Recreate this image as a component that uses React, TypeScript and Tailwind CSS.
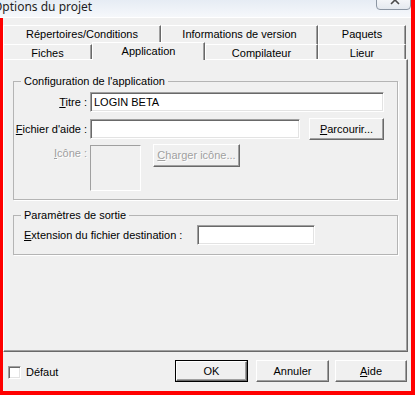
import React from 'react';

const raised =
  'bg-[#f0f0f0] border border-t-white border-l-white border-r-[#696969] border-b-[#696969] shadow-[inset_-1px_-1px_0_#a0a0a0]';
const sunken =
  'border border-t-[#a0a0a0] border-l-[#a0a0a0] border-r-white border-b-white shadow-[inset_1px_1px_0_#696969,inset_-1px_-1px_0_#e3e3e3]';
const disabledText = 'text-[#a0a0a0] [text-shadow:1px_1px_0_#fff]';

const Tab = ({ label, w, selected = false }: { label: string; w: string; selected?: boolean }) => (
  <div
    className={`${w} flex justify-center border-t border-l border-t-white border-l-white border-r border-r-[#696969] shadow-[inset_-1px_0_0_#a0a0a0] bg-[#f0f0f0] ${
      selected ? 'relative z-10 h-[18px] -mb-[1px] pt-[2px]' : 'h-full pt-[2px]'
    }`}
  >
    {label}
  </div>
);

const App = () => {
  return (
    <div className="w-[415px] h-[395px] overflow-hidden bg-[#f0f0f0] border-r-4 border-b-4 border-[#ff0000] font-['Liberation_Sans',Arial,sans-serif] text-[11px] leading-[13px] text-black flex flex-col">
      {/* title bar */}
      <div className="h-[18px] shrink-0 flex justify-between bg-gradient-to-b from-[#e6ecf4] to-[#f6f8fb] border-b border-b-white">
        <span className="-ml-[7px] pt-[1px] text-[12px] leading-[12px] text-[#1e1e1e] font-['Noto_Sans',sans-serif]">
          Options du projet
        </span>
        <div className="w-[35px] h-[11px] -mt-[1px] rounded-b-[4px] border border-[#8c96a3] bg-gradient-to-b from-[#f3f5f8] to-[#e5e9ef]">
          <svg width="33" height="10" viewBox="0 0 33 10">
            <path d="M14 -4 L22 4 M22 -4 L14 4" stroke="#4a4a4a" strokeWidth="1.6" fill="none" />
          </svg>
        </div>
      </div>

      {/* body */}
      <div className="flex-1 flex flex-col border-l-[3px] border-[#ff0000]">
        {/* tabs */}
        <div className="mt-[7px] w-[403px] flex flex-col">
          <div className="h-[19px] flex">
            <Tab label="Répertoires/Conditions" w="w-[158px]" />
            <Tab label="Informations de version" w="w-[157px]" />
            <Tab label="Paquets" w="w-[88px]" />
          </div>
          <div className="h-[15px] flex items-end">
            <Tab label="Fiches" w="w-[89px]" />
            <Tab label="Application" w="w-[113px]" selected />
            <Tab label="Compilateur" w="w-[113px]" />
            <Tab label="Lieur" w="w-[88px]" />
          </div>
        </div>

        {/* tab page */}
        <div className="w-[405px] h-[293px] border-t border-l border-t-white border-l-white border-r border-b border-r-[#696969] border-b-[#696969] shadow-[inset_-1px_-1px_0_#a0a0a0] px-[9px]">
          <fieldset className="mt-[15px] border border-[#b4b4b4] shadow-[1px_1px_0_#fff] pb-[8px]">
            <legend className="ml-[7px] px-[3px]">Configuration de l'application</legend>
            <div className="flex flex-col pt-[4px]">
              <div className="flex items-center">
                <span className="w-[73px] text-right">
                  <u>T</u>itre :
                </span>
                <div className={`ml-[3px] w-[294px] h-[20px] bg-white ${sunken} flex items-center pl-[3px]`}>
                  LOGIN BETA
                </div>
              </div>
              <div className="mt-[6px] flex items-center">
                <span className="w-[73px] text-right">
                  <u>F</u>ichier d'aide :
                </span>
                <div className={`ml-[3px] w-[210px] h-[20px] bg-white ${sunken}`} />
                <div className={`ml-[9px] w-[75px] h-[22px] ${raised} flex items-center justify-center`}>
                  <span>
                    <u>P</u>arcourir...
                  </span>
                </div>
              </div>
              <div className="mt-[5px] flex items-start">
                <span className={`w-[73px] pt-[2px] text-right ${disabledText}`}>
                  <u>I</u>cône :
                </span>
                <div className={`ml-[3px] w-[51px] h-[46px] ${sunken} shadow-none border-[#c8c8c8] border-r-white border-b-white`} />
                <div className={`ml-[12px] -mt-[1px] w-[87px] h-[23px] ${raised} flex items-center justify-center ${disabledText}`}>
                  <span>
                    <u>C</u>harger icône...
                  </span>
                </div>
              </div>
            </div>
          </fieldset>

          <fieldset className="mt-[9px] border border-[#b4b4b4] shadow-[1px_1px_0_#fff] pb-[9px]">
            <legend className="ml-[7px] px-[3px]">Paramètres de sortie</legend>
            <div className="pt-[3px] flex items-center">
              <span className="ml-[10px] w-[173px]">
                <u>E</u>xtension du fichier destination :
              </span>
              <div className={`w-[118px] h-[20px] bg-white ${sunken}`} />
            </div>
          </fieldset>
        </div>

        {/* bottom bar */}
        <div className="flex items-start pt-[8px] pr-[4px]">
          <div className="mt-[6px] ml-[5px] flex items-center">
            <div className={`w-[13px] h-[13px] bg-white ${sunken}`} />
            <span className="ml-[5px]">Défaut</span>
          </div>
          <div className="ml-auto w-[73px] h-[22px] border border-black">
            <div className={`w-full h-full ${raised} flex items-center justify-center`}>OK</div>
          </div>
          <div className={`ml-[8px] w-[73px] h-[22px] ${raised} flex items-center justify-center`}>Annuler</div>
          <div className={`ml-[6px] w-[72px] h-[22px] ${raised} flex items-center justify-center`}>
            <span>
              <u>A</u>ide
            </span>
          </div>
        </div>
      </div>
    </div>
  );
};

export default App;
